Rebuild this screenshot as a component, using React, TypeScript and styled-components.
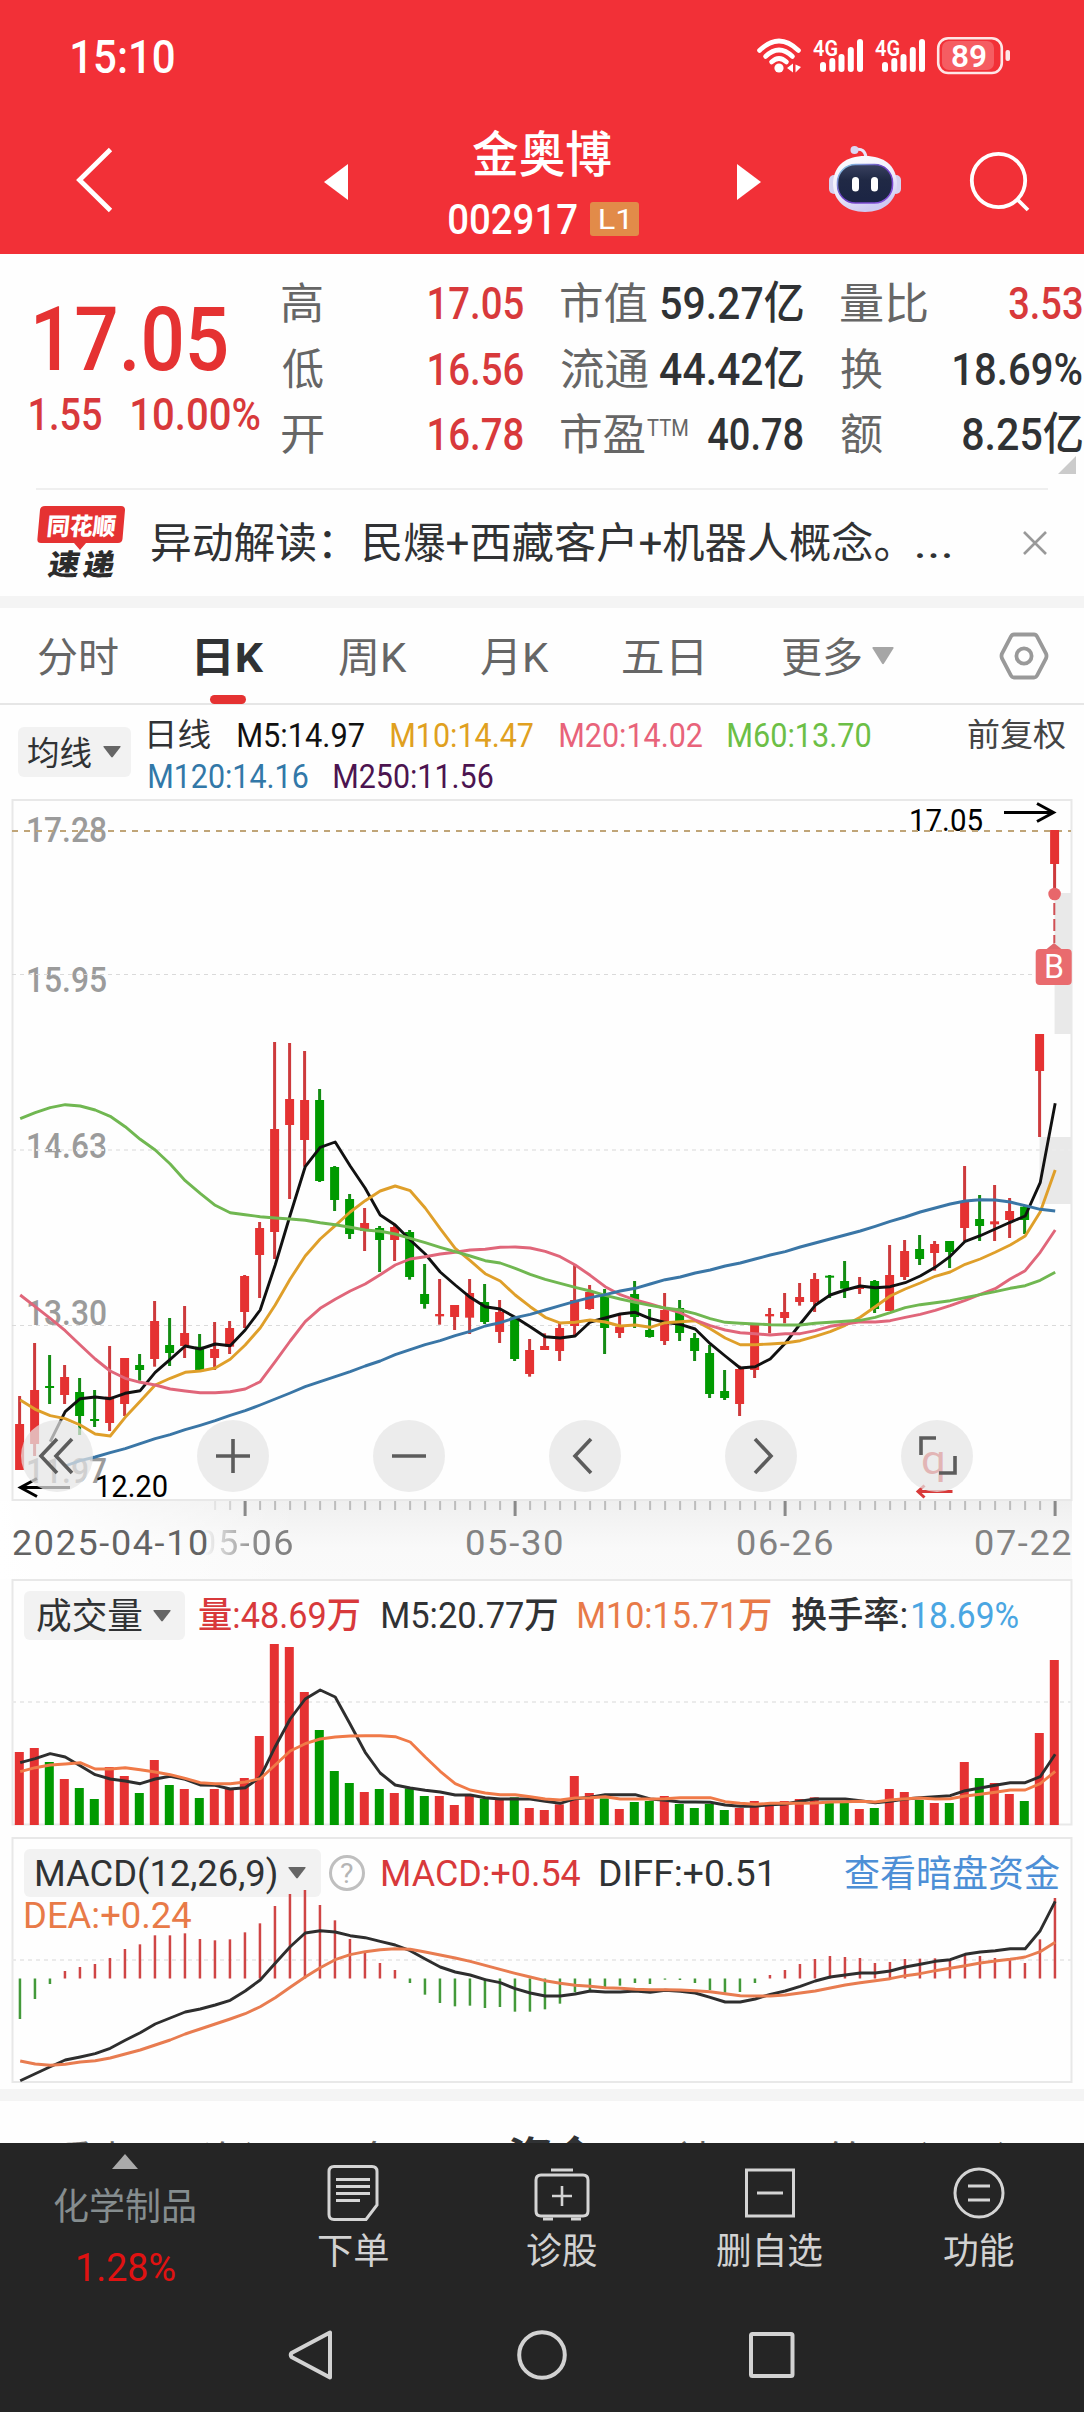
import React, { useLayoutEffect, useRef, useState } from 'react';
import styled, { createGlobalStyle, css } from 'styled-components';

const SANS = `Roboto, "Noto Sans CJK SC", sans-serif`;

const Global = createGlobalStyle`
  html, body { margin: 0; background: #fff; }
  * { box-sizing: border-box; }
  svg { display: block; flex: none; }
`;

const RED = '#d8393b';
const INK = '#303234';
const GREY = '#666';

/* ---------- text fitted to a given ink width ---------- */

interface FitProps {
  w: number;
  size: number;
  color?: string;
  weight?: number;
  ml?: number;
  mt?: number;
  dy?: number;
  spacing?: number;
  children: string;
}

const FitBox = styled.span<{ $w: number; $size: number; $ml: number; $mt: number }>`
  display: inline-block;
  flex: none;
  width: ${(p) => p.$w}px;
  height: ${(p) => p.$size}px;
  margin-left: ${(p) => p.$ml}px;
  margin-top: ${(p) => p.$mt}px;
`;

const FitInk = styled.span<{ $size: number; $color: string; $weight: number; $spacing: number }>`
  display: inline-block;
  white-space: pre;
  transform-origin: 0 50%;
  font-family: ${SANS};
  font-size: ${(p) => p.$size}px;
  line-height: ${(p) => p.$size}px;
  font-weight: ${(p) => p.$weight};
  letter-spacing: ${(p) => p.$spacing}px;
  color: ${(p) => p.$color};
`;

function Fit({ w, size, color = INK, weight = 400, ml = 0, mt = 0, dy = 1, spacing = 0, children }: FitProps) {
  const ref = useRef<HTMLSpanElement>(null);
  const [transform, setTransform] = useState('none');
  useLayoutEffect(() => {
    const ctx = document.createElement('canvas').getContext('2d');
    if (!ctx || !ref.current) return;
    ctx.font = `${weight} ${size}px ${SANS}`;
    const m = ctx.measureText(children);
    const advance = ref.current.offsetWidth;
    const left = -m.actualBoundingBoxLeft;
    const tail = m.width - m.actualBoundingBoxRight + spacing;
    const k = w / (advance - left - tail);
    setTransform(`translate(${-left * k}px, ${dy}px) scaleX(${k})`);
  }, [w, size, weight, dy, spacing, children]);
  return (
    <FitBox $w={w} $size={size} $ml={ml} $mt={mt}>
      <FitInk ref={ref} $size={size} $color={color} $weight={weight} $spacing={spacing} style={{ transform }}>
        {children}
      </FitInk>
    </FitBox>
  );
}

/* ---------- shared layout ---------- */

const Screen = styled.div`
  width: 1084px;
  height: 2412px;
  overflow: hidden;
  display: flex;
  flex-direction: column;
  background: #fefefe;
`;

const Band = styled.div`
  flex: none;
  height: 12px;
  background: #f4f4f4;
`;

const Shift = styled.div<{ $ml?: number; $mt?: number }>`
  flex: none;
  margin-left: ${(p) => p.$ml ?? 0}px;
  margin-top: ${(p) => p.$mt ?? 0}px;
`;

/* ---------- header ---------- */

const Header = styled.header`
  flex: none;
  height: 254px;
  background: #f23037;
`;

const StatusBar = styled.div`
  height: 114px;
  padding-left: 72px;
  display: flex;
  align-items: center;
`;

const NavBar = styled.div`
  height: 140px;
  display: flex;
  align-items: flex-start;
`;

const TitleStack = styled.div`
  flex: none;
  width: 190px;
  height: 128px;
  margin: 9px 0 0 101px;
  display: flex;
  flex-direction: column;
`;

const TitleLine = styled.div<{ $pl: number }>`
  height: 64px;
  padding-left: ${(p) => p.$pl}px;
  display: flex;
  align-items: center;
`;

const LevelBadge = styled.span`
  width: 49px;
  height: 34px;
  margin-left: 13px;
  border-radius: 3px;
  background: #e28b49;
  display: flex;
  align-items: center;
  padding-left: 10px;
`;

const Signal = ({ x }: { x: number }) => (
  <g transform={`translate(${x} 0)`} fill="#fff">
    <text x="0" y="56" fontFamily="Roboto, sans-serif" fontSize="22" fontWeight="600" textLength="25" lengthAdjust="spacingAndGlyphs">4G</text>
    <rect x="7" y="62" width="6" height="10" rx="3" />
    <rect x="16.3" y="58" width="6" height="14" rx="3" />
    <rect x="25.5" y="54" width="6" height="18" rx="3" />
    <rect x="34.8" y="47" width="6" height="25" rx="3" />
    <rect x="44" y="39" width="6" height="33" rx="3" />
  </g>
);

const StatusIcons = () => (
  <svg width="256" height="42" viewBox="756 35 256 42">
    <g fill="none" stroke="#fff" strokeWidth="4.6" strokeLinecap="round">
      <path d="M759.5 50.5 Q779 31.5 798.5 50.5" />
      <path d="M765.5 56.5 Q779 43.5 792.5 56.5" />
      <path d="M771.5 62 Q779 55 786.5 62" />
    </g>
    <circle cx="779" cy="68" r="4.6" fill="#fff" />
    <path d="M793 63.5v9l-6-4.5zM795.5 64.5l5.5 2.5-5.5 5.5z" fill="#fff" />
    <Signal x={813} />
    <Signal x={875} />
    <rect x="942" y="41" width="52" height="29" rx="7" fill="#fff" fillOpacity="0.22" />
    <rect x="938.2" y="38.2" width="63.6" height="34.8" rx="10" fill="none" stroke="#fff" strokeOpacity="0.88" strokeWidth="2.6" />
    <rect x="1005.5" y="50" width="4.5" height="11" rx="2" fill="#fff" fillOpacity="0.88" />
    <text x="951" y="66.5" fontFamily="Roboto, sans-serif" fontSize="32" fontWeight="600" fill="#fff" textLength="36" lengthAdjust="spacingAndGlyphs">89</text>
  </svg>
);

const Robot = () => (
  <svg width="74" height="68" viewBox="828 145 74 68">
    <defs>
      <linearGradient id="shell" x1="0" y1="0" x2="0.4" y2="1">
        <stop offset="0" stopColor="#ffffff" />
        <stop offset="0.6" stopColor="#eeecfb" />
        <stop offset="1" stopColor="#cfcaf2" />
      </linearGradient>
      <linearGradient id="rim" x1="0" y1="0" x2="1" y2="1">
        <stop offset="0" stopColor="#8fe0ea" />
        <stop offset="0.45" stopColor="#6a3fc0" />
        <stop offset="1" stopColor="#8a55e0" />
      </linearGradient>
      <linearGradient id="visor" x1="0" y1="0" x2="0" y2="1">
        <stop offset="0" stopColor="#39415f" />
        <stop offset="0.4" stopColor="#202945" />
        <stop offset="1" stopColor="#1b2444" />
      </linearGradient>
    </defs>
    <path d="M856 149.500q9-1.500 10 8" fill="none" stroke="#e9e6fa" strokeWidth="3" />
    <circle cx="854.500" cy="150" r="4" fill="#dcd8f4" />
    <rect x="829" y="175" width="10" height="19" rx="5" fill="#d4d2f0" />
    <rect x="891" y="175" width="10" height="19" rx="5" fill="#d4d2f0" />
    <path d="M865 156c19 0 31 9 32 27 0 18-13 29-32 29s-32-11-32-29c1-18 13-27 32-27z" fill="url(#shell)" />
    <rect x="837.500" y="164.500" width="55" height="38.500" rx="18" fill="url(#visor)" stroke="url(#rim)" strokeWidth="1.600" />
    <rect x="852" y="177" width="7" height="14.500" rx="3.500" fill="#fff" />
    <rect x="871" y="177" width="7" height="14.500" rx="3.500" fill="#fff" />
  </svg>
);

function TopHeader() {
  return (
    <Header>
      <StatusBar>
        <Fit w={102} size={46} dy={0} color="#fff" weight={500}>15:10</Fit>
        <Shift $ml={582} $mt={-2}><StatusIcons /></Shift>
      </StatusBar>
      <NavBar>
        <Shift $ml={75} $mt={31}>
          <svg width="40" height="70" viewBox="75 145 40 70">
            <path d="M110.500 149.500 L79.500 180 L110.500 210.500" fill="none" stroke="#fff" strokeWidth="4.800" />
          </svg>
        </Shift>
        <Shift $ml={209} $mt={50}>
          <svg width="24" height="36" viewBox="0 0 24 36"><path d="M24 0v36L0 18z" fill="#fff" /></svg>
        </Shift>
        <TitleStack>
          <TitleLine $pl={24}><Fit w={138} size={48.5} dy={0.5} color="#fff" weight={500}>金奥博</Fit></TitleLine>
          <TitleLine $pl={0}>
            <Fit w={128} size={42} dy={0.5} color="#fff" weight={500}>002917</Fit>
            <LevelBadge><Fit w={27} size={28} color="#fff">L1</Fit></LevelBadge>
          </TitleLine>
        </TitleStack>
        <Shift $ml={98} $mt={50}>
          <svg width="24" height="36" viewBox="0 0 24 36"><path d="M0 0v36l24-18z" fill="#fff" /></svg>
        </Shift>
        <Shift $ml={67} $mt={31}><Robot /></Shift>
        <Shift $ml={66} $mt={36}>
          <svg width="64" height="64" viewBox="968 150 64 64">
            <circle cx="998.500" cy="180.500" r="26.700" fill="none" stroke="#fff" strokeWidth="3.800" />
            <path d="M1017 199l11 11" stroke="#fff" strokeWidth="3.800" />
          </svg>
        </Shift>
      </NavBar>
    </Header>
  );
}

/* ---------- quote ---------- */

const Quote = styled.section`
  position: relative;
  flex: none;
  height: 234px;
  display: grid;
  grid-template-columns: 282px 1fr;
  padding-top: 16px;
`;

const PriceBlock = styled.div`
  display: flex;
  flex-direction: column;
`;

const Change = styled.div`
  display: flex;
  padding-left: 30px;
  margin-top: 7px;
`;

const Columns = styled.div`
  display: grid;
  grid-template-columns: 241px 242px 241px;
  grid-auto-rows: 65.5px;
  align-content: start;
  column-gap: 38px;
`;

const Cell = styled.div`
  display: flex;
  align-items: center;
  justify-content: space-between;
`;

const LabelGroup = styled.div`
  display: flex;
`;

const Corner = styled.svg`
  position: absolute;
  right: 8px;
  bottom: 14px;
`;

const CellLabel = ({ w, children }: { w: number; children: string }) => (
  <Fit w={w} size={43} color={GREY} dy={2}>{children}</Fit>
);

const CellValue = ({ w, color, children }: { w: number; color?: string; children: string }) => (
  <Fit w={w} size={45} weight={500} color={color}>{children}</Fit>
);

function QuotePanel() {
  return (
    <Quote>
      <PriceBlock>
        <Shift $ml={36} $mt={25}><Fit w={190} size={89} dy={0} color="#e53232" weight={500}>17.05</Fit></Shift>
        <Change>
          <Fit w={71} size={45} dy={0.5} color={RED} weight={500}>1.55</Fit>
          <Fit w={128} ml={31} size={45} dy={0.5} color={RED} weight={500}>10.00%</Fit>
        </Change>
      </PriceBlock>
      <Columns>
        <Cell><CellLabel w={40}>高</CellLabel><CellValue w={94} color={RED}>17.05</CellValue></Cell>
        <Cell><CellLabel w={86}>市值</CellLabel><CellValue w={142}>59.27亿</CellValue></Cell>
        <Cell><CellLabel w={86}>量比</CellLabel><CellValue w={73} color={RED}>3.53</CellValue></Cell>
        <Cell><CellLabel w={41}>低</CellLabel><CellValue w={94} color={RED}>16.56</CellValue></Cell>
        <Cell><CellLabel w={87}>流通</CellLabel><CellValue w={143}>44.42亿</CellValue></Cell>
        <Cell><CellLabel w={41}>换</CellLabel><CellValue w={128}>18.69%</CellValue></Cell>
        <Cell><CellLabel w={41}>开</CellLabel><CellValue w={94} color={RED}>16.78</CellValue></Cell>
        <Cell>
          <LabelGroup>
            <CellLabel w={84}>市盈</CellLabel>
            <Fit w={41} ml={2} mt={4} size={23} color={GREY}>TTM</Fit>
          </LabelGroup>
          <CellValue w={95}>40.78</CellValue>
        </Cell>
        <Cell><CellLabel w={41}>额</CellLabel><CellValue w={119}>8.25亿</CellValue></Cell>
      </Columns>
      <Corner width="18" height="18" viewBox="0 0 18 18"><path d="M18 0v18H0z" fill="#cbcbcb" /></Corner>
    </Quote>
  );
}

const News = styled.section`
  flex: none;
  height: 108px;
  margin: 0 36px;
  border-top: 2px solid #efefef;
  display: flex;
  align-items: center;
`;

function NewsRow() {
  return (
    <News>
      <Shift $ml={1} $mt={-2}>
        <svg width="90" height="74" viewBox="37 505 90 74">
          <path d="M45 506H121q4 0 4 4l-2.500 29q-.5 4-4.500 4H86l-6 7-6-7H41q-4 0-3.600-4l2.600-29q.5-4 5-4z" fill="#e53232" />
          <g fontFamily='"Noto Sans CJK SC", sans-serif' fontWeight="900">
            <text transform="translate(46 535) skewX(-6)" fontSize="24" fill="#fff" textLength="69" lengthAdjust="spacingAndGlyphs">同花顺</text>
            <text transform="translate(47 575) skewX(-10)" fontSize="29" fill="#2c2c2c" textLength="31" lengthAdjust="spacingAndGlyphs">速</text>
            <text transform="translate(82 575) skewX(-10)" fontSize="29" fill="#2c2c2c" textLength="31" lengthAdjust="spacingAndGlyphs">递</text>
          </g>
        </svg>
      </Shift>
      <Fit w={179} ml={25} size={42}>异动解读：</Fit>
      <Fit w={526} ml={32} size={42}>民爆+西藏客户+机器人概念。</Fit>
      <Fit w={34} ml={27} size={42}>...</Fit>
      <Shift $ml={73} $mt={-1}>
        <svg width="24" height="24" viewBox="0 0 24 24"><path d="M1 1l22 22M23 1L1 23" stroke="#999" strokeWidth="2.600" /></svg>
      </Shift>
    </News>
  );
}

/* ---------- period tabs ---------- */

const Tabs = styled.nav`
  flex: none;
  height: 97px;
  border-bottom: 2px solid #e6e6e6;
  padding-left: 38px;
  display: flex;
  align-items: center;
`;

const Tab = styled.div<{ $ml: number; $active?: boolean }>`
  position: relative;
  height: 95px;
  margin-left: ${(p) => p.$ml}px;
  display: flex;
  align-items: center;
  ${(p) =>
    p.$active &&
    css`
      &::after {
        content: '';
        position: absolute;
        left: 13px;
        bottom: -1px;
        width: 36px;
        height: 9px;
        border-radius: 5px;
        background: #e53232;
      }
    `}
`;

const Caret = ({ w, h, color = '#666' }: { w: number; h: number; color?: string }) => (
  <svg width={w} height={h} viewBox="0 0 18 13" preserveAspectRatio="none"><path d="M1 0h16q1 0 .5 1L9.800 12q-.8 1-1.600 0L.5 1Q0 0 1 0z" fill={color} /></svg>
);

function PeriodTabs() {
  return (
    <Tabs>
      <Tab $ml={0}><Fit w={80} size={41} dy={3} color={GREY}>分时</Fit></Tab>
      <Tab $ml={79} $active><Fit w={67} size={41} dy={3} weight={700}>日K</Fit></Tab>
      <Tab $ml={75}><Fit w={68} size={41} dy={3} color={GREY}>周K</Fit></Tab>
      <Tab $ml={74}><Fit w={68} size={41} dy={3} color={GREY}>月K</Fit></Tab>
      <Tab $ml={74}><Fit w={79} size={41} dy={3} color={GREY}>五日</Fit></Tab>
      <Tab $ml={80}>
        <Fit w={79} size={41} dy={3} color={GREY}>更多</Fit>
        <Shift $ml={11}><Caret w={22} h={18} color="#a6a6a6" /></Shift>
      </Tab>
      <Shift $ml={105}>
        <svg width="50" height="48" viewBox="0 0 50 48" fill="none" stroke="#999" strokeWidth="3.800">
          <path d="M15 2.500h20q2 0 3 2l9 17q1 2.500 0 5l-9 17q-1 2-3 2H15q-2 0-3-2l-9-17q-1-2.500 0-5l9-17q1-2 3-2z" />
          <circle cx="25" cy="24" r="7.600" />
        </svg>
      </Shift>
    </Tabs>
  );
}

/* ---------- moving averages legend ---------- */

const MaBar = styled.div`
  flex: none;
  height: 94px;
  display: flex;
  align-items: flex-start;
  padding: 8px 0 0 18px;
`;

const Picker = styled.div<{ $w: number; $h: number; $pl: number; $mt?: number }>`
  flex: none;
  width: ${(p) => p.$w}px;
  height: ${(p) => p.$h}px;
  margin-top: ${(p) => p.$mt ?? 0}px;
  padding-left: ${(p) => p.$pl}px;
  border-radius: 6px;
  background: #f2f2f2;
  display: flex;
  align-items: center;
`;

const MaLines = styled.div`
  width: 819px;
  margin-left: 18px;
`;

const MaLine = styled.div`
  height: 41px;
  display: flex;
  align-items: center;
`;

const MaValue = ({ w, ml, color, children }: { w: number; ml?: number; color: string; children: string }) => (
  <Fit w={w} ml={ml} size={33.5} weight={450} dy={1.5} color={color}>{children}</Fit>
);

function MaLegend() {
  return (
    <MaBar>
      <Picker $w={113} $h={50} $pl={10} $mt={14}>
        <Fit w={63} size={33}>均线</Fit>
        <Shift $ml={12}><Caret w={18} h={12} /></Shift>
      </Picker>
      <MaLines>
        <MaLine>
          <Fit w={61} size={32}>日线</Fit>
          <MaValue w={126} ml={28} color="#111">M5:14.97</MaValue>
          <MaValue w={142} ml={27} color="#e0a020">M10:14.47</MaValue>
          <MaValue w={142} ml={27} color="#e8637a">M20:14.02</MaValue>
          <MaValue w={142} ml={26} color="#6cbf46">M60:13.70</MaValue>
        </MaLine>
        <MaLine>
          <MaValue w={159} color="#3278a8">M120:14.16</MaValue>
          <MaValue w={159} ml={26} color="#4c1450">M250:11.56</MaValue>
        </MaLine>
      </MaLines>
      <Shift $mt={5}><Fit w={97} size={32} color="#444">前复权</Fit></Shift>
    </MaBar>
  );
}

/* ---------- chart data ---------- */

const X0 = 19.6;
const STEP = 15;
const xAt = (i: number) => X0 + i * STEP;

// [up, high, body top, body bottom, low] in thirds of a pixel from the price origin
type Candle = [number, number, number, number, number];
const candles: Candle[] = [
  [1, 648, 732, 870, 870], [1, 489, 630, 792, 828], [0, 525, 618, 624, 672], [1, 555, 591, 645, 672], [0, 594, 636, 708, 765],
  [0, 630, 717, 723, 741], [1, 498, 650, 729, 753], [1, 534, 534, 672, 708], [0, 522, 555, 570, 602], [1, 363, 423, 537, 560],
  [0, 414, 495, 519, 558], [1, 378, 459, 498, 534], [0, 462, 500, 570, 572], [1, 426, 507, 534, 570], [1, 423, 444, 500, 522],
  [1, 285, 288, 396, 444], [1, 126, 144, 225, 354], [1, -414, -153, 156, 237], [1, -411, -243, -165, 57], [1, -387, -240, -120, -40],
  [0, -273, -240, 3, 6], [0, -42, -39, 60, 93], [0, 42, 57, 162, 177], [1, 84, 129, 153, 213], [0, 138, 144, 180, 276],
  [1, 135, 141, 180, 243], [0, 150, 156, 291, 299], [0, 252, 342, 372, 386], [1, 297, 402, 409, 434], [1, 375, 375, 411, 450],
  [1, 297, 339, 413, 462], [0, 312, 366, 426, 432], [1, 360, 396, 456, 489], [0, 408, 412, 537, 543], [1, 477, 510, 582, 590],
  [1, 460, 498, 510, 510], [1, 429, 444, 513, 543], [1, 255, 360, 438, 468], [1, 315, 336, 387, 389], [0, 327, 348, 444, 522],
  [1, 405, 440, 459, 474], [0, 303, 342, 411, 444], [0, 387, 450, 471, 473], [1, 339, 390, 483, 495], [0, 360, 384, 459, 483],
  [0, 459, 474, 513, 543], [0, 495, 519, 642, 654], [0, 570, 633, 654, 660], [1, 557, 567, 672, 708], [1, 429, 432, 570, 594],
  [1, 384, 402, 409, 460], [1, 339, 396, 414, 430], [1, 309, 351, 366, 377], [1, 279, 297, 366, 396], [0, 285, 287, 293, 354],
  [0, 243, 303, 326, 354], [1, 291, 320, 327, 342], [0, 300, 303, 387, 399], [1, 195, 285, 393, 393], [1, 180, 213, 291, 300],
  [0, 165, 207, 237, 255], [1, 183, 192, 219, 272], [0, 183, 183, 216, 264], [1, -42, 66, 144, 184], [0, 45, 117, 138, 183],
  [1, 15, 124, 133, 183], [1, 54, 93, 120, 174], [0, 75, 80, 120, 162], [1, -438, -438, -327, -129], [1, -1050, -1050, -948, -858],
];

const ma5 = [785, 695, 656, 651, 656, 640, 632, 577, 538, 498, 507, 492, 497, 450, 390, 255, 105, -40, -98, -114, -42, 25, 105, 135, 180, 222, 276, 315, 352, 380, 387, 412, 440, 470, 474, 468, 426, 414, 402, 397, 416, 427, 433, 447, 491, 528, 564, 560, 537, 490, 432, 376, 345, 330, 318, 323, 320, 308, 288, 262, 229, 184, 167, 147, 127, 108, 8, -230];
const ma10 = [660, 688, 707, 716, 735, 762, 768, 712, 664, 615, 595, 577, 573, 564, 538, 495, 444, 375, 297, 228, 177, 137, 96, 62, 33, 18, 32, 84, 146, 205, 242, 281, 303, 345, 380, 412, 429, 427, 420, 426, 438, 435, 442, 428, 425, 422, 446, 474, 494, 494, 492, 489, 482, 469, 455, 436, 412, 380, 348, 327, 309, 289, 276, 253, 237, 217, 195, 168, 96, -30];
const ma20 = [345, 380, 415, 452, 495, 537, 573, 595, 607, 615, 627, 633, 638, 638, 635, 627, 605, 545, 483, 425, 385, 358, 333, 312, 284, 255, 237, 230, 222, 217, 210, 208, 202, 201, 204, 214, 230, 255, 286, 320, 344, 360, 372, 385, 398, 420, 437, 450, 458, 461, 465, 461, 461, 452, 439, 432, 425, 426, 422, 412, 403, 391, 377, 361, 343, 326, 297, 272, 217, 150];
const ma60 = [-184, -202, -217, -226, -222, -210, -191, -160, -122, -90, -48, 2, 40, 76, 98, 104, 110, 114, 117, 121, 128, 134, 142, 150, 154, 162, 175, 188, 202, 215, 228, 242, 249, 265, 283, 298, 310, 322, 333, 346, 357, 367, 376, 384, 390, 401, 416, 427, 430, 432, 434, 435, 435, 430, 427, 424, 421, 412, 398, 383, 374, 368, 362, 353, 344, 335, 325, 317, 301, 277];
const ma120 = [858, 842, 831, 818, 806, 791, 776, 764, 749, 736, 722, 706, 692, 675, 657, 639, 620, 605, 590, 575, 558, 543, 524, 509, 494, 482, 467, 454, 438, 428, 413, 403, 390, 377, 364, 353, 344, 333, 325, 312, 299, 291, 279, 270, 258, 249, 237, 225, 215, 201, 189, 177, 165, 153, 139, 124, 111, 96, 84, 72, 63, 59, 60, 66, 77, 88, 93];

const volumes = [546, 534, 576, 627, 654, 687, 591, 618, 669, 570, 645, 657, 684, 657, 655, 624, 498, 222, 231, 366, 480, 603, 639, 666, 657, 669, 655, 678, 678, 705, 678, 686, 687, 682, 714, 720, 703, 618, 669, 685, 717, 696, 693, 678, 702, 714, 702, 720, 714, 693, 705, 693, 687, 682, 697, 697, 717, 714, 657, 666, 690, 699, 699, 576, 624, 639, 672, 693, 489, 270];
const vol5 = [578, 566, 551, 561, 587, 614, 627, 633, 641, 627, 619, 628, 645, 646, 657, 653, 622, 530, 447, 387, 360, 381, 463, 547, 609, 645, 654, 661, 666, 675, 675, 683, 687, 687, 687, 694, 700, 686, 682, 674, 674, 674, 687, 691, 696, 696, 697, 705, 709, 709, 704, 702, 694, 687, 687, 687, 692, 698, 694, 687, 683, 680, 677, 662, 654, 646, 638, 638, 620, 553];
const vol10 = [605, 593, 585, 582, 578, 597, 597, 593, 599, 606, 614, 625, 638, 641, 641, 636, 626, 585, 543, 521, 507, 501, 498, 497, 497, 500, 516, 561, 604, 641, 660, 669, 674, 674, 680, 687, 690, 684, 683, 680, 687, 687, 687, 686, 683, 683, 683, 695, 700, 703, 700, 700, 700, 699, 696, 695, 694, 696, 690, 686, 684, 687, 686, 678, 673, 667, 660, 660, 641, 604];

const macdBars = [567, 507, 462, 423, 411, 402, 384, 357, 343, 316, 316, 310, 327, 331, 328, 307, 280, 228, 192, 180, 225, 271, 327, 367, 399, 420, 459, 494, 519, 529, 527, 534, 531, 545, 545, 538, 521, 487, 480, 475, 467, 459, 462, 449, 450, 459, 480, 488, 486, 459, 435, 420, 402, 387, 378, 381, 384, 399, 396, 387, 386, 385, 392, 374, 378, 384, 388, 399, 328, 204];
const diff = [752, 731, 710, 690, 681, 671, 655, 631, 608, 582, 564, 546, 537, 525, 511, 483, 450, 400, 350, 309, 302, 306, 317, 323, 334, 345, 362, 387, 411, 426, 435, 449, 458, 476, 489, 498, 498, 492, 483, 486, 486, 483, 487, 481, 484, 489, 502, 516, 516, 507, 493, 483, 469, 453, 441, 435, 429, 429, 423, 411, 403, 394, 389, 373, 366, 362, 356, 356, 302, 214];
const dea = [693, 702, 706, 703, 696, 692, 684, 672, 660, 645, 630, 612, 597, 582, 567, 551, 530, 503, 472, 441, 413, 389, 374, 365, 359, 356, 358, 366, 375, 384, 394, 406, 418, 430, 441, 452, 460, 466, 469, 473, 475, 478, 479, 479, 480, 482, 485, 491, 497, 498, 498, 495, 489, 483, 474, 465, 458, 452, 446, 437, 431, 422, 415, 407, 399, 393, 388, 381, 365, 337];

interface SeriesProps { values: number[]; origin: number; color: string; from?: number; width?: number }
const Series = ({ values, origin, color, from = 0, width = 2.9 }: SeriesProps) => (
  <polyline
    fill="none"
    stroke={color}
    strokeWidth={width}
    strokeLinejoin="round"
    points={values.map((v, k) => `${(xAt(k + from) + 0.600).toFixed(1)},${(origin + v / 3).toFixed(1)}`).join(' ')}
  />
);

/* ---------- price chart ---------- */

const Layered = styled.section<{ $h: number }>`
  flex: none;
  height: ${(p) => p.$h}px;
  display: grid;
  grid-template: 100% / 100%;
  & > * { grid-area: 1 / 1; }
`;

const ZoomBar = styled.div`
  align-self: end;
  z-index: 1;
  display: flex;
  justify-content: space-between;
  padding: 0 111px 9px 21px;
`;

const RoundButton = styled.button`
  width: 72px;
  height: 72px;
  padding: 0;
  border: 0;
  border-radius: 50%;
  background: rgba(229, 229, 229, 0.72);
  display: flex;
  align-items: center;
  justify-content: center;
`;

const glyphs = [
  'M15 -17 L-1 0 L15 17 M0 -17 L-16 0 L0 17',
  'M-17 0 H17 M0 -17 V17',
  'M-17 0 H17',
  'M6 -17 L-10 0 L6 17',
  'M-6 -17 L10 0 L-6 17',
  'M-16 -1 V-18 H-1 M18 0 V17 H2',
];

const axisLabels: [string, number][] = [['17.28', 842], ['15.95', 992], ['14.63', 1158], ['13.30', 1325], ['11.97', 1483]];

function PriceChart() {
  return (
    <Layered $h={702}>
      <svg width="1084" height="702" viewBox="0 799 1084 702">
        <g fontFamily={SANS} fontSize="35.500" fontWeight="500" fill="#9b9b9b">
          {axisLabels.map(([t, y]) => (
            <text key={t} x="26" y={y} textLength="81" lengthAdjust="spacingAndGlyphs">{t}</text>
          ))}
        </g>
        <g fontFamily={SANS} fontSize="31" fill="#000">
          <text x="909" y="830.500" textLength="74" lengthAdjust="spacingAndGlyphs">17.05</text>
          <text x="95" y="1497" textLength="73" lengthAdjust="spacingAndGlyphs">12.20</text>
        </g>
        <rect x="12.500" y="800" width="1059" height="700" fill="none" stroke="#e8e8e8" strokeWidth="2" />
        <rect x="1054.600" y="893" width="17.400" height="141" fill="#e9e9e9" />
        <rect x="1039.600" y="1137" width="32.400" height="67" fill="#e9e9e9" />
        <path d="M12 831H1071" stroke="#c0a578" strokeWidth="2" strokeDasharray="6 6" />
        <path d="M12 974.500H1071M12 1325.500H1071" stroke="#dadada" strokeWidth="1.200" strokeDasharray="4 4" />
        <path d="M12 1150H1071" stroke="#ebebeb" strokeWidth="2" strokeDasharray="4 4" />
        {candles.map(([up, hi, top, bot, lo], i) => {
          const y = (v: number) => 1180 + v / 3;
          return (
            <g key={i} fill={up ? '#e53232' : '#009a00'}>
              <rect x={xAt(i) - 1.5} y={y(hi)} width="3" height={(lo - hi) / 3} fill={up ? '#cd3a3c' : '#148c14'} />
              <rect x={xAt(i) - 4.5} y={y(top)} width="9" height={Math.max(2, (bot - top) / 3)} />
            </g>
          );
        })}
        <Series values={ma5} from={2} origin={1180} color="#111" />
        <Series values={ma10} origin={1180} color="#df9f2a" />
        <Series values={ma20} origin={1180} color="#e0667a" />
        <Series values={ma60} origin={1180} color="#70b751" />
        <Series values={ma120} from={3} origin={1180} color="#3a76a6" />
        <g stroke="#000" strokeWidth="3" fill="none">
          <path d="M1004 812.500H1053M1037 803.500L1053.500 812.500L1037 821.500" />
          <path d="M70 1487.500H21M37 1478.500L20.500 1487.500L37 1496.500" />
        </g>
        <circle cx="1054.600" cy="894" r="6.300" fill="#e8676b" />
        <path d="M1054.300 903V943" stroke="#d05055" strokeWidth="2" strokeDasharray="12 4" />
        <path d="M1046 949.500L1054 943L1062 949.500z" fill="#e0676b" />
        <rect x="1035.700" y="949" width="36" height="36" rx="4" fill="#e96b6e" />
        <text x="1044" y="978" fontFamily={SANS} fontSize="33" fill="#fff" textLength="20" lengthAdjust="spacingAndGlyphs">B</text>
        <text x="921" y="1474" fontFamily={SANS} fontSize="40" fill="#da3a3a" textLength="25" lengthAdjust="spacingAndGlyphs">q</text>
        <path d="M952.500 1491.500H918M924.500 1485.500L918 1491.500L924.500 1497.500" stroke="#d83a3a" strokeWidth="3" fill="none" />
      </svg>
      <ZoomBar>
        {glyphs.map((d, i) => (
          <RoundButton key={i}>
            <svg width="48" height="48" viewBox="-24 -24 48 48"><path d={d} fill="none" stroke="#5c5c5c" strokeWidth="3.600" /></svg>
          </RoundButton>
        ))}
      </ZoomBar>
    </Layered>
  );
}

const Axis = styled.div`
  flex: none;
  height: 78px;
  width: 1072px;
  background: linear-gradient(90deg, #fff 0, rgba(255, 255, 255, 0) 300px), linear-gradient(#efefef, #f9f9f9 60%, #fafafa);
`;

const AxisLabels = styled.div`
  display: flex;
  padding: 8px 0 0 13px;
`;

const FadeLeft = styled.div`
  margin-left: -8px;
  mask-image: linear-gradient(90deg, transparent 6%, #000 65%);
`;

const AxisDate = ({ w = 95, ml, color = '#828282', children }: { w?: number; ml?: number; color?: string; children: string }) => (
  <Fit w={w} ml={ml} size={35.5} weight={450} spacing={1.6} dy={0.5} color={color}>{children}</Fit>
);

function TimeAxis() {
  return (
    <Axis>
      <svg width="1072" height="16" viewBox="0 0 1072 16">
        {Array.from({ length: 57 }, (_, k) => k + 13).map((i) => {
          const major = (i - 15) % 18 === 0;
          return (
            <rect
              key={i}
              x={xAt(i) - (major ? 1 : 0.5)}
              y="0"
              width={major ? 3 : 2}
              height={major ? 15 : 9}
              fill={major ? '#8a8a8a' : '#bdbdbd'}
              opacity={i < 15 ? 0.3 + (i - 13) * 0.3 : 1}
            />
          );
        })}
      </svg>
      <AxisLabels>
        <AxisDate w={193} color="#636363">2025-04-10</AxisDate>
        <FadeLeft><AxisDate>05-06</AxisDate></FadeLeft>
        <AxisDate ml={174}>05-30</AxisDate>
        <AxisDate ml={176}>06-26</AxisDate>
        <AxisDate ml={143}>07-22</AxisDate>
      </AxisLabels>
    </Axis>
  );
}

/* ---------- indicators ---------- */

const Legend = styled.div<{ $pt: number }>`
  align-self: start;
  display: flex;
  align-items: center;
  padding: ${(p) => p.$pt}px 0 0 24px;
`;

const LegendText = ({ w, ml, color, children }: { w: number; ml?: number; color?: string; children: string }) => (
  <Fit w={w} ml={ml} size={36.5} weight={450} color={color}>{children}</Fit>
);

function VolumeChart() {
  return (
    <Layered $h={253}>
      <svg width="1084" height="253" viewBox="0 1579 1084 253">
        <rect x="12.500" y="1580" width="1059" height="244.500" fill="none" stroke="#e8e8e8" strokeWidth="2" />
        <path d="M12 1702H1071" stroke="#ebebeb" strokeWidth="2" strokeDasharray="4 4" />
        {volumes.map((v, i) => (
          <rect key={i} x={xAt(i) - 4.800} y={1570 + v / 3} width="9" height={255 - v / 3} fill={candles[i][0] ? '#e53232' : '#009a00'} />
        ))}
        <Series values={vol5} origin={1570} color="#2e2e2e" />
        <Series values={vol10} origin={1570} color="#f07a48" />
      </svg>
      <Legend $pt={12}>
        <Picker $w={161} $h={49} $pl={13}>
          <Fit w={105} size={36}>成交量</Fit>
          <Shift $ml={11}><Caret w={18} h={12} /></Shift>
        </Picker>
        <LegendText w={161} ml={14} color={RED}>量:48.69万</LegendText>
        <LegendText w={174} ml={23}>M5:20.77万</LegendText>
        <LegendText w={192} ml={22} color="#e87a48">M10:15.71万</LegendText>
        <LegendText w={114} ml={21}>换手率:</LegendText>
        <LegendText w={105} ml={7} color="#4aa6e2">18.69%</LegendText>
      </Legend>
    </Layered>
  );
}

const MacdLegend = styled.div`
  align-self: start;
  display: flex;
  flex-direction: column;
`;

const DeaRow = styled.div`
  padding: 0 0 0 26px;
`;

const HelpMark = styled.span`
  width: 36px;
  height: 36px;
  margin-left: 8px;
  border: 3px solid #bfbfbf;
  border-radius: 50%;
  display: flex;
  align-items: center;
  justify-content: center;
`;

function MacdChart() {
  return (
    <Layered $h={257}>
      <MacdLegend>
        <Legend $pt={17}>
          <Picker $w={297} $h={48} $pl={13}>
            <LegendText w={240}>MACD(12,26,9)</LegendText>
            <Shift $ml={11}><Caret w={18} h={12} /></Shift>
          </Picker>
          <HelpMark><Fit w={12} size={28} color="#b5b5b5">?</Fit></HelpMark>
          <LegendText w={197} ml={18} color={RED}>MACD:+0.54</LegendText>
          <LegendText w={168} ml={21}>DIFF:+0.51</LegendText>
          <Fit w={214} ml={76} size={37} color="#4d8fd6">查看暗盘资金</Fit>
        </Legend>
        <DeaRow><LegendText w={165} color="#e87a48">DEA:+0.24</LegendText></DeaRow>
      </MacdLegend>
      <svg width="1084" height="257" viewBox="0 1832 1084 257">
        <rect x="12.500" y="1838" width="1059" height="244" fill="none" stroke="#e8e8e8" strokeWidth="2" />
        <path d="M12 1960H1071" stroke="#ebebeb" strokeWidth="2" strokeDasharray="4 4" />
        {macdBars.map((v, i) => {
          const y = 1830 + v / 3;
          const up = v < 445;
          return (
            <rect key={i} x={xAt(i) - 0.900} y={up ? y : 1978.500} width="2.500" height={Math.abs(1978.500 - y)} fill={up ? '#cf4545' : '#43993a'} />
          );
        })}
        <Series values={diff} origin={1830} color="#2e2e2e" />
        <Series values={dea} origin={1830} color="#e87c50" />
      </svg>
    </Layered>
  );
}

/* ---------- lower tabs and footer ---------- */

const LowerTabs = styled.div`
  flex: none;
  height: 42px;
  overflow: hidden;
  display: flex;
  align-items: flex-start;
  padding: 34px 0 0 55px;
`;

const Footer = styled.footer`
  flex: none;
  height: 269px;
  background: #252525;
`;

const Actions = styled.div`
  height: 154px;
  display: grid;
  grid-template-columns: 249px repeat(4, 208.5px);
`;

const Sector = styled.div`
  display: flex;
  flex-direction: column;
  align-items: center;
  padding-top: 11px;
`;

const Action = styled.div`
  display: flex;
  flex-direction: column;
  align-items: center;
  padding-top: 21px;
`;

const actionItems = [
  { label: '下单', w: 69, icon: <><path d="M10 2.500h38q5 0 5 5V41L42 55.500H10q-5 0-5-5v-43q0-5 5-5z" /><path d="M12 15.500h34M12 22.500h34M12 29.500h34M12 36.500h24" /></> },
  { label: '诊股', w: 70, icon: <><path d="M18 6h22" /><path d="M8 11h42q5 0 5 5v31q0 5-5 5H8q-5 0-5-5V16q0-5 5-5z" /><path d="M19 32h20M29 22v20" strokeWidth="2.600" /><path d="M10 55h10M38 55h10" /></> },
  { label: '删自选', w: 106, icon: <><path d="M5.500 6h47v46h-47z" /><path d="M16 29h26" /></> },
  { label: '功能', w: 70, icon: <><circle cx="29" cy="29" r="24" /><path d="M18 22h22M18 36h22" /></> },
];

const SystemNav = styled.div`
  height: 115px;
  display: flex;
  align-items: center;
  justify-content: center;
  gap: 180px;
`;

const NavGlyph = ({ children }: { children: React.ReactNode }) => (
  <svg width="50" height="54" viewBox="-25 -27 50 54" fill="none" stroke="#d2d2d2" strokeWidth="4" strokeLinejoin="round">{children}</svg>
);

function BottomBar() {
  return (
    <Footer>
      <Actions>
        <Sector>
          <svg width="26" height="15" viewBox="0 0 26 15"><path d="M13 0l13 15H0z" fill="#aaa" /></svg>
          <Fit w={141} mt={19} size={37} color="#858d8f">化学制品</Fit>
          <Fit w={97} mt={23} ml={4} size={39} color="#e01212">1.28%</Fit>
        </Sector>
        {actionItems.map((a) => (
          <Action key={a.label}>
            <svg width="58" height="58" viewBox="0 0 58 58" fill="none" stroke="#d4d4d4" strokeWidth="3">{a.icon}</svg>
            <Fit w={a.w} mt={11} size={36.5} color="#d2d2d2">{a.label}</Fit>
          </Action>
        ))}
      </Actions>
      <SystemNav>
        <NavGlyph><path d="M18 -22.500V22.500L-20.500 2Q-22 0 -20.500 -2z" /></NavGlyph>
        <NavGlyph><circle r="22.800" /></NavGlyph>
        <NavGlyph><rect x="-21" y="-21" width="41.500" height="42" rx="1.500" /></NavGlyph>
      </SystemNav>
    </Footer>
  );
}

export default function App() {
  return (
    <Screen>
      <Global />
      <TopHeader />
      <QuotePanel />
      <NewsRow />
      <Band />
      <PeriodTabs />
      <MaLegend />
      <PriceChart />
      <TimeAxis />
      <VolumeChart />
      <MacdChart />
      <Band />
      <LowerTabs>
        <Fit w={76} mt={5} size={38} color={GREY}>看点</Fit>
        <Fit w={78} ml={72} mt={5} size={38} color={GREY}>资讯</Fit>
        <Fit w={76} ml={74} mt={5} size={38} color={GREY}>盘口</Fit>
        <Fit w={88} ml={78} mt={1} size={44} weight={700}>资金</Fit>
        <Fit w={76} ml={80} mt={5} size={38} color={GREY}>社区</Fit>
        <Fit w={184} ml={74} mt={5} size={38} color={GREY}>简况(F10)</Fit>
      </LowerTabs>
      <BottomBar />
    </Screen>
  );
}
